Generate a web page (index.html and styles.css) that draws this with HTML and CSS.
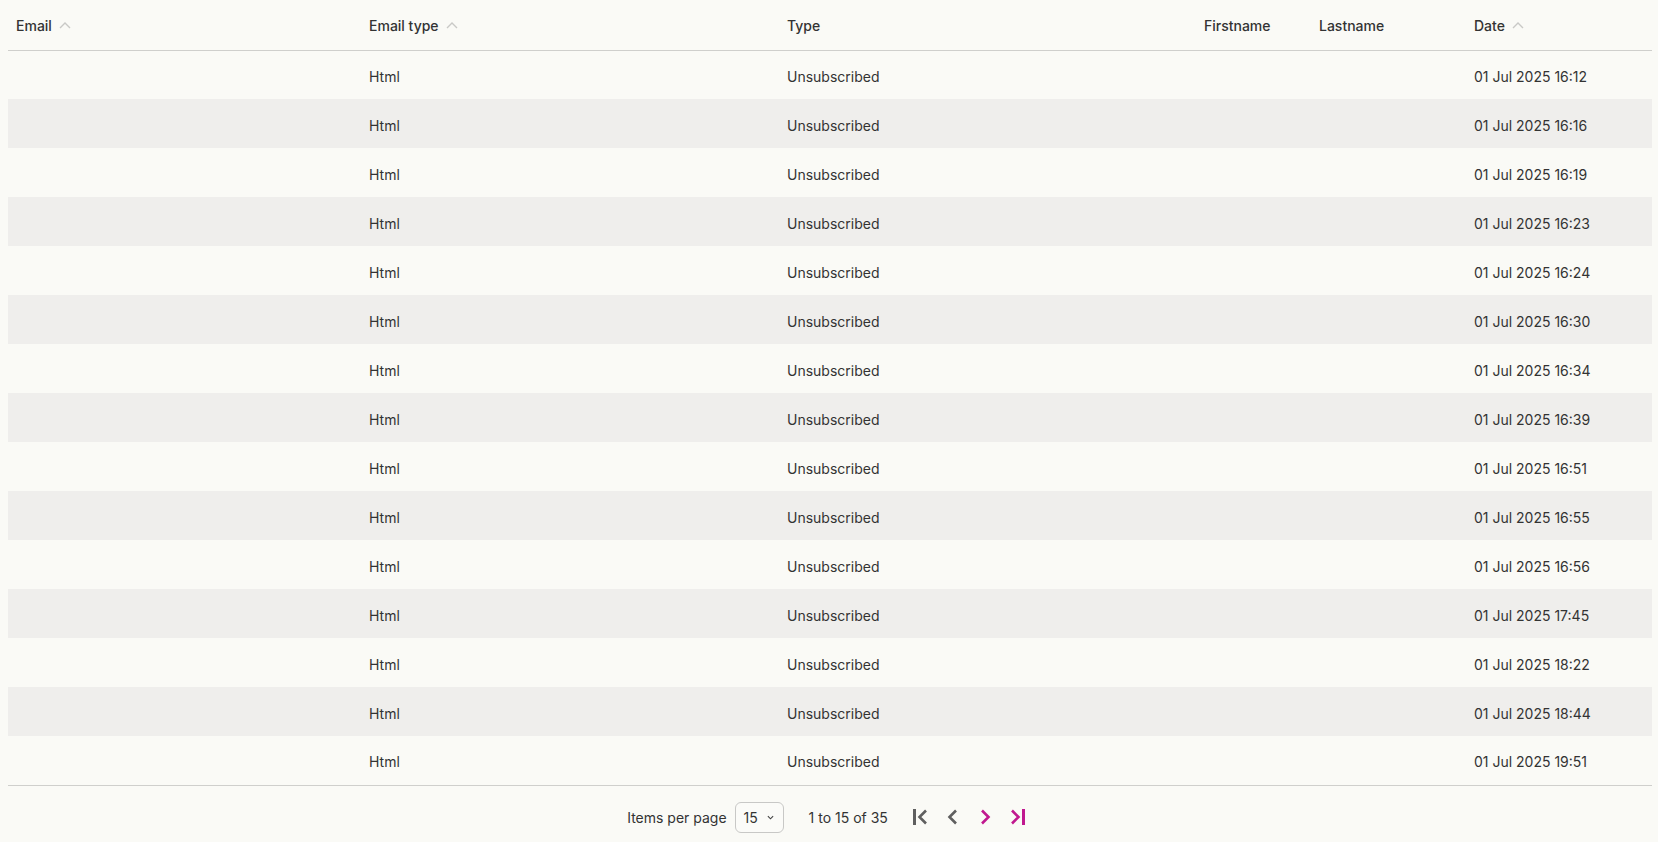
FILE: index.html
```html
<!DOCTYPE html>
<html lang="en">
<head>
<meta charset="utf-8">
<title>Unsubscribed</title>
<link rel="stylesheet" href="styles.css">
</head>
<body>
<div class="page">
  <table class="grid">
    <colgroup>
      <col class="c-email"><col class="c-etype"><col class="c-type"><col class="c-first"><col class="c-last"><col class="c-date">
    </colgroup>
    <thead>
      <tr>
        <th><span class="hd">Email <svg class="sort" viewBox="0 0 12 7"><polyline points="1,6 6,1 11,6"/></svg></span></th>
        <th><span class="hd">Email type <svg class="sort" viewBox="0 0 12 7"><polyline points="1,6 6,1 11,6"/></svg></span></th>
        <th><span class="hd">Type</span></th>
        <th><span class="hd">Firstname</span></th>
        <th><span class="hd">Lastname</span></th>
        <th><span class="hd">Date <svg class="sort" viewBox="0 0 12 7"><polyline points="1,6 6,1 11,6"/></svg></span></th>
      </tr>
    </thead>
    <tbody>
      <tr><td></td><td>Html</td><td>Unsubscribed</td><td></td><td></td><td>01 Jul 2025 16:12</td></tr>
      <tr><td></td><td>Html</td><td>Unsubscribed</td><td></td><td></td><td>01 Jul 2025 16:16</td></tr>
      <tr><td></td><td>Html</td><td>Unsubscribed</td><td></td><td></td><td>01 Jul 2025 16:19</td></tr>
      <tr><td></td><td>Html</td><td>Unsubscribed</td><td></td><td></td><td>01 Jul 2025 16:23</td></tr>
      <tr><td></td><td>Html</td><td>Unsubscribed</td><td></td><td></td><td>01 Jul 2025 16:24</td></tr>
      <tr><td></td><td>Html</td><td>Unsubscribed</td><td></td><td></td><td>01 Jul 2025 16:30</td></tr>
      <tr><td></td><td>Html</td><td>Unsubscribed</td><td></td><td></td><td>01 Jul 2025 16:34</td></tr>
      <tr><td></td><td>Html</td><td>Unsubscribed</td><td></td><td></td><td>01 Jul 2025 16:39</td></tr>
      <tr><td></td><td>Html</td><td>Unsubscribed</td><td></td><td></td><td>01 Jul 2025 16:51</td></tr>
      <tr><td></td><td>Html</td><td>Unsubscribed</td><td></td><td></td><td>01 Jul 2025 16:55</td></tr>
      <tr><td></td><td>Html</td><td>Unsubscribed</td><td></td><td></td><td>01 Jul 2025 16:56</td></tr>
      <tr><td></td><td>Html</td><td>Unsubscribed</td><td></td><td></td><td>01 Jul 2025 17:45</td></tr>
      <tr><td></td><td>Html</td><td>Unsubscribed</td><td></td><td></td><td>01 Jul 2025 18:22</td></tr>
      <tr><td></td><td>Html</td><td>Unsubscribed</td><td></td><td></td><td>01 Jul 2025 18:44</td></tr>
      <tr><td></td><td>Html</td><td>Unsubscribed</td><td></td><td></td><td>01 Jul 2025 19:51</td></tr>
    </tbody>
  </table>
  <div class="pager">
    <span class="label">Items per page</span>
    <div class="select"><span>15</span><svg class="caret" viewBox="0 0 8 5"><polyline points="1,1 4,4 7,1"/></svg></div>
    <span class="range">1 to 15 of 35</span>
    <div class="nav">
      <button class="btn off" aria-label="First page"><svg viewBox="0 0 16 16"><rect x="0" y="0" width="3" height="16"/><polyline points="13,1.5 6.5,8 13,14.5"/></svg></button>
      <button class="btn off" aria-label="Previous page"><svg viewBox="0 0 16 16"><polyline points="11,1.5 4.5,8 11,14.5"/></svg></button>
      <button class="btn on" aria-label="Next page"><svg viewBox="0 0 16 16"><polyline points="5,1.5 11.5,8 5,14.5"/></svg></button>
      <button class="btn on" aria-label="Last page"><svg viewBox="0 0 16 16"><polyline points="3,1.5 9.5,8 3,14.5"/><rect x="13" y="0" width="3" height="16"/></svg></button>
    </div>
  </div>
</div>
</body>
</html>
```
FILE: styles.css
```css
* { box-sizing: border-box; }
html, body { margin: 0; padding: 0; background: #fafaf6; }
body {
  font-family: Inter, "Liberation Sans", sans-serif;
  font-size: 14px;
  color: #333;
}
.page { padding: 0 6px 0 8px; }
.grid {
  width: 100%;
  border-collapse: collapse;
  table-layout: fixed;
}
.c-email { width: 353px; }
.c-etype { width: 418px; }
.c-type { width: 417px; }
.c-first { width: 115px; }
.c-last { width: 155px; }
.c-date { width: 186px; }
.grid thead tr { height: 50px; }
.grid th {
  padding: 1px 8px 0;
  text-align: left;
  font-weight: 500;
  color: #333;
  border-bottom: 1px solid #cfcfcc;
  vertical-align: middle;
}
.hd { display: inline-flex; align-items: center; gap: 7px; }
.sort { width: 12px; height: 7px; fill: none; stroke: #c9c9c6; stroke-width: 1.4; }
.grid tbody tr { height: 49px; }
.grid td {
  padding: 3px 8px 0;
  vertical-align: middle;
  white-space: nowrap;
}
.grid tbody tr:nth-child(even) { background: #efeeec; }
.grid tbody tr:last-child td { border-bottom: 1px solid #cfcfcc; }
.pager {
  display: flex;
  justify-content: center;
  align-items: flex-start;
  padding: 16px 0 0;
  height: 55px;
}
.label { line-height: 31px; margin-right: 8px; }
.select {
  width: 49px;
  height: 31px;
  border: 1px solid #c8c8c6;
  border-radius: 6px;
  background: #fbfbf8;
  display: flex;
  align-items: center;
  justify-content: space-between;
  padding: 0 9px 0 8px;
}
.caret { width: 7px; height: 5px; fill: none; stroke: #444; stroke-width: 1.3; }
.range { line-height: 31px; margin-left: 25px; margin-right: 17px; }
.nav { display: flex; height: 31px; align-items: center; }
.btn {
  width: 32px;
  height: 31px;
  padding: 0;
  border: 0;
  background: none;
  display: flex;
  align-items: center;
  justify-content: center;
}
.btn svg { width: 16px; height: 16px; }
.btn.off svg { fill: #5f5f5f; stroke: #5f5f5f; }
.btn.on svg { fill: #c0188f; stroke: #c0188f; }
.btn svg polyline { fill: none; stroke-width: 2.6; }
.btn svg rect { stroke: none; }
```
